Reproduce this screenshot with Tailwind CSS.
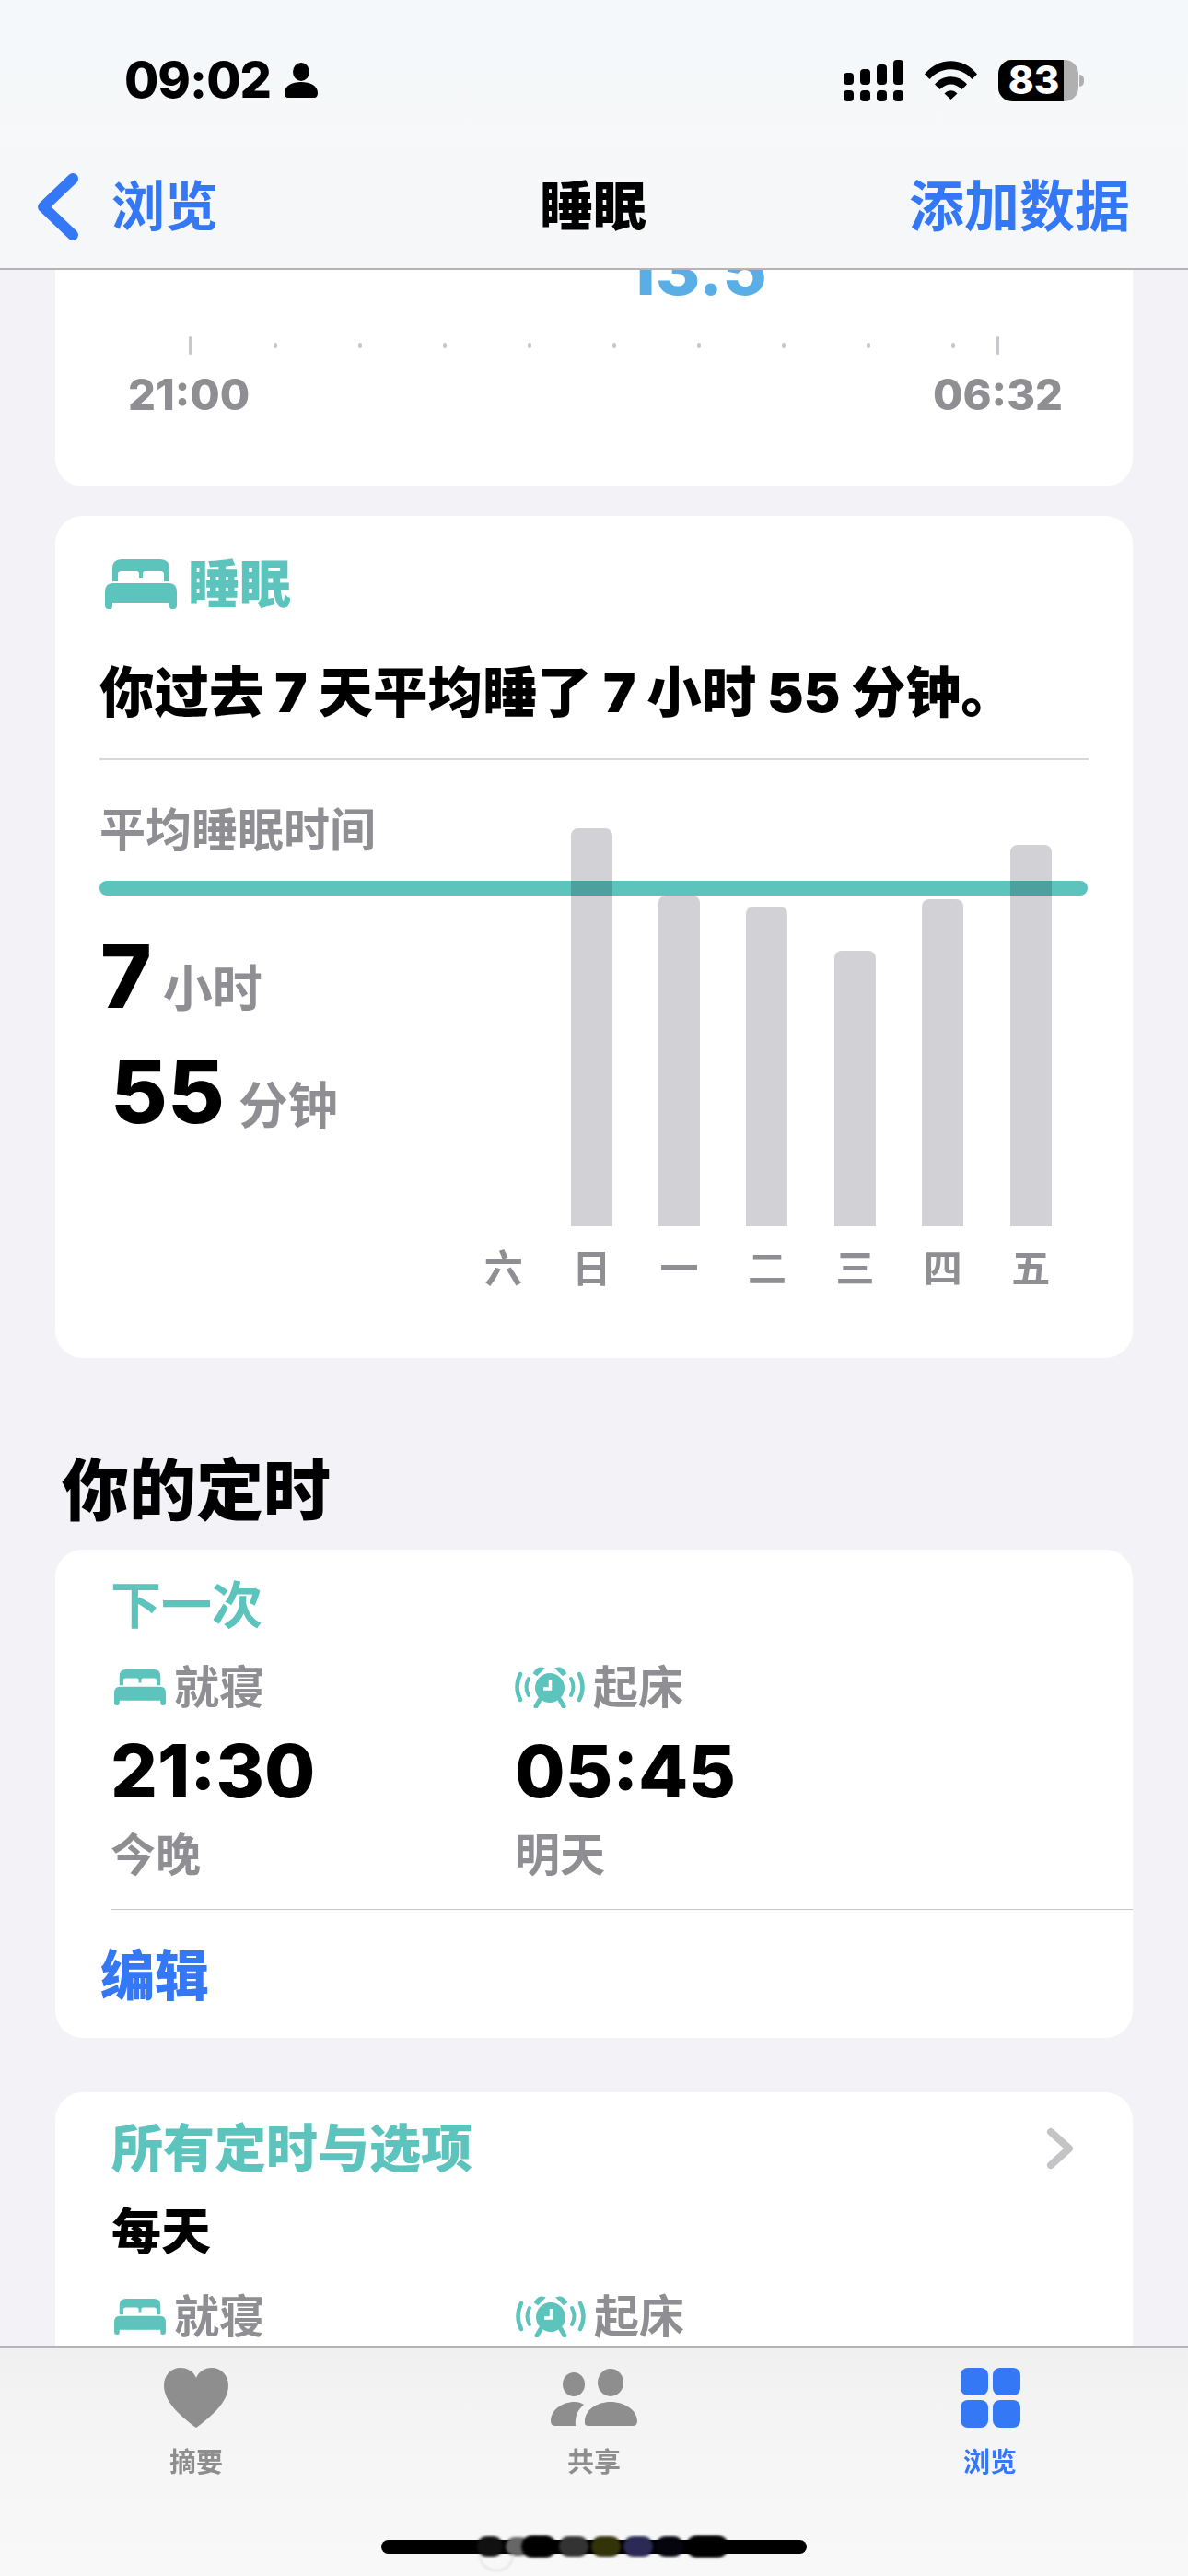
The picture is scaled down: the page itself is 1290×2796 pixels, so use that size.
<!DOCTYPE html>
<html lang="zh-CN">
  <head>
    <meta charset="UTF-8" />
    <meta name="viewport" content="width=device-width,initial-scale=1.0" />
    <title>睡眠</title>
    <script src="https://cdn.jsdelivr.net/npm/@tailwindcss/browser@4"></script>
  </head>
  <body>
    <div class="relative flex flex-col w-[1290px] h-[2796px] overflow-hidden bg-[#f2f2f7] font-['Inter','Noto_Sans_CJK_SC',sans-serif]">
      <!-- status bar + nav -->
      <header class="shrink-0 h-[293px] bg-gradient-to-b from-[#f5f8fa] to-[#f6f7f8] border-b-2 border-[#b4b4b6] z-10">
        <div class="flex items-center justify-between h-[174px] pl-[135px] pr-[113px]">
          <div class="flex items-center gap-[15px]">
            <span class="text-[54px] leading-none font-extrabold text-black tracking-[-1px]">09:02</span>
            <svg class="w-[36px] h-[38px]" viewBox="0 0 36 38" fill="#000">
              <ellipse cx="18" cy="10" rx="9" ry="10" />
              <path d="M0 33C0 25 8 21 18 21S36 25 36 33Q36 38 32 38H4Q0 38 0 33Z" />
            </svg>
          </div>
          <div class="flex items-center gap-[23px]">
            <svg class="w-[65px] h-[45px]" viewBox="0 0 65 45" fill="#000">
              <rect x="0" y="14" width="11" height="13" rx="4" />
              <rect x="18" y="10" width="11" height="17" rx="4" />
              <rect x="36" y="5" width="11" height="22" rx="4" />
              <rect x="54" y="0" width="11" height="27" rx="4" />
              <rect x="0" y="33" width="11" height="12" rx="4" />
              <rect x="18" y="33" width="11" height="12" rx="4" />
              <rect x="36" y="33" width="11" height="12" rx="4" />
              <rect x="54" y="33" width="11" height="12" rx="4" />
            </svg>
            <svg class="w-[57px] h-[42px]" viewBox="0 0 57 42" fill="#000">
              <path d="M0 14.500C15 -4.500 42 -4.500 57 14.500L51.500 20C39 5.500 18 5.500 5.500 20Z" />
              <path d="M11 25.500C20 14.500 37 14.500 46 25.500L40.500 31C33 23.500 24 23.500 16.500 31Z" />
              <path d="M21.500 35.500C25.500 31 31.500 31 35.500 35.500L28.500 42Z" />
            </svg>
            <div class="flex items-center">
              <div class="flex w-[87px] h-[45px] rounded-[15px] bg-[#b0b0b0]">
                <div class="flex items-center justify-center w-[71px] rounded-l-[15px] bg-black pl-[6px] text-white text-[42px] leading-none font-extrabold">83</div>
              </div>
              <div class="w-[5px] h-[13px] ml-[1px] rounded-r-full bg-[#b0b0b0]"></div>
            </div>
          </div>
        </div>
        <div class="relative flex items-center justify-between h-[100px] pl-[41px] pr-[63px]">
          <div class="flex items-center gap-[36px]">
            <svg class="w-[44px] h-[73px]" viewBox="0 0 44 73" fill="none" stroke="#3478f6" stroke-width="12" stroke-linecap="round" stroke-linejoin="round">
              <path d="M38 6L6 36.500L38 67" />
            </svg>
            <span class="text-[58px] leading-none font-bold text-[#3478f6]">浏览</span>
          </div>
          <span class="absolute left-[586px] text-[58px] leading-none font-black text-black">睡眠</span>
          <span class="text-[60px] leading-none font-bold text-[#3478f6]">添加数据</span>
        </div>
      </header>

      <main class="flex-1 min-h-0 overflow-hidden px-[60px]">
        <!-- chart card cut off by nav -->
        <section class="h-[235px] rounded-b-[30px] bg-white overflow-hidden">
          <div class="h-[27px] pl-[619px]">
            <div class="-mt-[37px] text-[74px] leading-[74px] font-extrabold text-[#5aaee6]">13.5</div>
          </div>
          <div class="flex items-center h-[20px] mt-[82px] pl-[145px]">
            <span class="w-[3px] h-[20px] rounded-full bg-[#c7c7cc]"></span>
            <div class="flex items-center gap-[88px] ml-[89px]">
              <span class="w-[4px] h-[6px] rounded-full bg-[#c7c7cc]"></span>
              <span class="w-[4px] h-[6px] rounded-full bg-[#c7c7cc]"></span>
              <span class="w-[4px] h-[6px] rounded-full bg-[#c7c7cc]"></span>
              <span class="w-[4px] h-[6px] rounded-full bg-[#c7c7cc]"></span>
              <span class="w-[4px] h-[6px] rounded-full bg-[#c7c7cc]"></span>
              <span class="w-[4px] h-[6px] rounded-full bg-[#c7c7cc]"></span>
              <span class="w-[4px] h-[6px] rounded-full bg-[#c7c7cc]"></span>
              <span class="w-[4px] h-[6px] rounded-full bg-[#c7c7cc]"></span>
              <span class="w-[4px] h-[6px] rounded-full bg-[#c7c7cc]"></span>
            </div>
            <span class="w-[3px] h-[20px] ml-[45px] rounded-full bg-[#c7c7cc]"></span>
          </div>
          <div class="flex justify-between mt-[20px] pl-[79px] pr-[76px] text-[47px] leading-[46px] font-extrabold text-[#8e8e93]">
            <span>21:00</span>
            <span>06:32</span>
          </div>
        </section>

        <!-- average sleep card -->
        <section class="relative h-[914px] mt-[32px] rounded-[30px] bg-white pt-[44px]">
          <div class="flex items-center gap-[12px] h-[60px] pl-[54px]">
            <svg class="w-[78px] h-[54px]" viewBox="0 0 78 54" fill="#5cc4bd">
              <path d="M8 24V10Q8 0 18 0H60Q70 0 70 10V24H64V16Q64 13 60 13H44Q41 13 41 16V20H37V16Q37 13 34 13H18Q14 13 14 16V24Z" />
              <path d="M8 26H70Q78 26 78 36V50Q78 54 74 54H72Q70 54 70 50V47H8V50Q8 54 6 54H4Q0 54 0 50V36Q0 26 8 26Z" />
            </svg>
            <span class="text-[56px] leading-none font-black text-[#5cc4bd]">睡眠</span>
          </div>
          <p class="mt-[52px] pl-[48px] text-[59.500px] leading-[70px] font-black text-black whitespace-nowrap">你过去 7 天平均睡了 7 小时 55 分钟。</p>
          <div class="h-[2px] mt-[37px] mx-[48px] bg-[#d8d8dc]"></div>
          <!-- teal average line lies over the bars -->
          <div class="absolute left-[48px] top-[396px] w-[1073px] h-[16px] rounded-full bg-[#5cc4bd]"></div>
          <div class="flex mt-[48px] pl-[48px]">
            <div class="w-[393px] shrink-0">
              <div class="text-[50px] leading-[56px] font-bold text-[#8e8e93]">平均睡眠时间</div>
              <div class="flex items-end mt-[83px] pl-[1px]">
                <span class="text-[95px] leading-[95px] font-extrabold text-black">7</span>
                <span class="ml-[12px] mb-[6px] text-[54px] leading-none font-bold text-[#8e8e93]">小时</span>
              </div>
              <div class="flex items-end mt-[30px] pl-[12px]">
                <span class="text-[95px] leading-[95px] font-extrabold text-black">55</span>
                <span class="ml-[15px] mb-[4px] text-[54px] leading-none font-bold text-[#8e8e93]">分钟</span>
              </div>
            </div>
            <div class="grid grid-cols-7 w-[668px] mt-[26px] -ml-[2px] mix-blend-multiply">
              <div class="flex flex-col items-center justify-end h-[432px]"></div>
              <div class="flex flex-col items-center justify-end h-[432px]"><div class="w-[45px] h-[432px] rounded-t-[8px] bg-[#d1d1d6]"></div></div>
              <div class="flex flex-col items-center justify-end h-[432px]"><div class="w-[45px] h-[359px] rounded-t-[8px] bg-[#d1d1d6]"></div></div>
              <div class="flex flex-col items-center justify-end h-[432px]"><div class="w-[45px] h-[347px] rounded-t-[8px] bg-[#d1d1d6]"></div></div>
              <div class="flex flex-col items-center justify-end h-[432px]"><div class="w-[45px] h-[299px] rounded-t-[8px] bg-[#d1d1d6]"></div></div>
              <div class="flex flex-col items-center justify-end h-[432px]"><div class="w-[45px] h-[355px] rounded-t-[8px] bg-[#d1d1d6]"></div></div>
              <div class="flex flex-col items-center justify-end h-[432px]"><div class="w-[45px] h-[414px] rounded-t-[8px] bg-[#d1d1d6]"></div></div>
              <div class="col-span-7 grid grid-cols-7 mt-[22px] text-center text-[42px] leading-[48px] font-bold text-[#8e8e93]">
                <span>六</span><span>日</span><span>一</span><span>二</span><span>三</span><span>四</span><span>五</span>
              </div>
            </div>
          </div>
        </section>

        <h2 class="mt-[106px] pl-[7px] text-[73px] leading-[76px] font-black text-black">你的定时</h2>

        <!-- next schedule card -->
        <section class="h-[530px] mt-[26px] rounded-[30px] bg-white pt-[30px]">
          <div class="pl-[60px] text-[55px] leading-[60px] font-bold text-[#5cc4bd]">下一次</div>
          <div class="grid grid-cols-[439px_1fr] mt-[36px] pl-[60px]">
            <div>
              <div class="flex items-center gap-[9px] h-[46px] pl-[4px]">
                <svg class="w-[56px] h-[39px]" viewBox="0 0 78 54" fill="#5cc4bd">
                  <path d="M8 24V10Q8 0 18 0H60Q70 0 70 10V24H64V16Q64 13 60 13H44Q41 13 41 16V20H37V16Q37 13 34 13H18Q14 13 14 16V24Z" />
                  <path d="M8 26H70Q78 26 78 36V50Q78 54 74 54H72Q70 54 70 50V47H8V50Q8 54 6 54H4Q0 54 0 50V36Q0 26 8 26Z" />
                </svg>
                <span class="text-[49px] leading-none font-bold text-[#8e8e93]">就寝</span>
              </div>
              <div class="mt-[32px] text-[80px] leading-[72px] font-extrabold text-black">21:30</div>
              <div class="mt-[28px] text-[49px] leading-[56px] font-bold text-[#8e8e93]">今晚</div>
            </div>
            <div>
              <div class="flex items-center gap-[9px] h-[46px]">
                <svg class="w-[76px] h-[46px]" viewBox="0 0 76 46" fill="none" stroke="#5cc4bd">
                  <circle cx="38" cy="24" r="16" fill="#5cc4bd" stroke="none" />
                  <path d="M38.500 15V25H31" stroke="#fff" stroke-width="3.500" />
                  <path d="M21 8Q25 1 31 3L24 10Z" fill="#5cc4bd" stroke-width="2" />
                  <path d="M55 8Q51 1 45 3L52 10Z" fill="#5cc4bd" stroke-width="2" />
                  <path d="M27 37L23 44M49 37L53 44" stroke-width="5" stroke-linecap="round" />
                  <path d="M15 14Q10 23 15 32M61 14Q66 23 61 32" stroke-width="4" stroke-linecap="round" />
                  <path d="M6 9Q-1 23 6 37M70 9Q77 23 70 37" stroke-width="4.500" stroke-linecap="round" />
                </svg>
                <span class="text-[49px] leading-none font-bold text-[#8e8e93]">起床</span>
              </div>
              <div class="mt-[32px] text-[79px] leading-[72px] font-extrabold text-black">05:45</div>
              <div class="mt-[28px] text-[49px] leading-[56px] font-bold text-[#8e8e93]">明天</div>
            </div>
          </div>
          <div class="h-[1px] mt-[30px] ml-[60px] bg-[#c6c6c8]"></div>
          <div class="mt-[42px] pl-[49px] text-[59px] leading-[60px] font-black text-[#3478f6]">编辑</div>
        </section>

        <!-- all schedules card, runs under tab bar -->
        <section class="h-[400px] mt-[59px] rounded-t-[30px] bg-white pt-[30px] px-[61px]">
          <div class="flex items-center justify-between h-[62px]">
            <span class="text-[56px] leading-none font-black text-[#5cc4bd]">所有定时与选项</span>
            <svg class="w-[30px] h-[46px] mr-[3px]" viewBox="0 0 30 46" fill="none" stroke="#c4c4c6" stroke-width="8" stroke-linecap="round" stroke-linejoin="round">
              <path d="M5 5L25 23L5 41" />
            </svg>
          </div>
          <div class="mt-[30px] text-[54px] leading-[60px] font-black text-black">每天</div>
          <div class="grid grid-cols-[439px_1fr] mt-[38px]">
            <div class="flex items-center gap-[9px] h-[46px] pl-[3px]">
              <svg class="w-[56px] h-[39px]" viewBox="0 0 78 54" fill="#5cc4bd">
                <path d="M8 24V10Q8 0 18 0H60Q70 0 70 10V24H64V16Q64 13 60 13H44Q41 13 41 16V20H37V16Q37 13 34 13H18Q14 13 14 16V24Z" />
                <path d="M8 26H70Q78 26 78 36V50Q78 54 74 54H72Q70 54 70 50V47H8V50Q8 54 6 54H4Q0 54 0 50V36Q0 26 8 26Z" />
              </svg>
              <span class="text-[49px] leading-none font-bold text-[#8e8e93]">就寝</span>
            </div>
            <div class="flex items-center gap-[9px] h-[46px]">
              <svg class="w-[76px] h-[46px]" viewBox="0 0 76 46" fill="none" stroke="#5cc4bd">
                <circle cx="38" cy="24" r="16" fill="#5cc4bd" stroke="none" />
                <path d="M38.500 15V25H31" stroke="#fff" stroke-width="3.500" />
                <path d="M21 8Q25 1 31 3L24 10Z" fill="#5cc4bd" stroke-width="2" />
                <path d="M55 8Q51 1 45 3L52 10Z" fill="#5cc4bd" stroke-width="2" />
                <path d="M27 37L23 44M49 37L53 44" stroke-width="5" stroke-linecap="round" />
                <path d="M15 14Q10 23 15 32M61 14Q66 23 61 32" stroke-width="4" stroke-linecap="round" />
                <path d="M6 9Q-1 23 6 37M70 9Q77 23 70 37" stroke-width="4.500" stroke-linecap="round" />
              </svg>
              <span class="text-[49px] leading-none font-bold text-[#8e8e93]">起床</span>
            </div>
          </div>
        </section>
      </main>

      <!-- tab bar -->
      <footer class="relative shrink-0 h-[250px] bg-gradient-to-b from-[#f0f0f1] via-[#f6f6f7] to-[#f8f8f9] border-t-2 border-[#b4b4b6] z-10">
        <div class="grid grid-cols-3 pt-[22px]">
          <div class="flex flex-col items-center gap-[20px] w-[426px]">
            <svg class="w-[70px] h-[65px]" viewBox="0 0 70 65" fill="#8e8e8e">
              <path d="M35 65C20 54 0 38 0 19C0 8 8 0 18 0C26 0 32 4 35 11C38 4 44 0 52 0C62 0 70 8 70 19C70 38 50 54 35 65Z" />
            </svg>
            <span class="text-[29px] leading-[36px] font-bold text-[#8e8e8e]">摘要</span>
          </div>
          <div class="flex flex-col items-center gap-[20px]">
            <svg class="w-[94px] h-[65px]" viewBox="0 0 94 65" fill="#8e8e8e">
              <ellipse cx="25" cy="18" rx="12" ry="13" />
              <ellipse cx="65" cy="16" rx="14" ry="15" />
              <path d="M0 58C0 46 12 37 26 37C30 37 33 38 36 40C30 45 26 52 27 63H5Q0 63 0 58Z" />
              <path d="M37 58C37 46 50 37 65 37S94 46 94 58Q94 63 89 63H41Q36 63 37 58Z" />
            </svg>
            <span class="text-[29px] leading-[36px] font-bold text-[#8e8e8e]">共享</span>
          </div>
          <div class="flex flex-col items-center gap-[20px]">
            <svg class="w-[65px] h-[65px]" viewBox="0 0 65 65" fill="#3478f6">
              <rect x="0" y="0" width="30" height="30" rx="8" />
              <rect x="35" y="0" width="30" height="30" rx="8" />
              <rect x="0" y="35" width="30" height="30" rx="8" />
              <rect x="35" y="35" width="30" height="30" rx="8" />
            </svg>
            <span class="text-[29px] leading-[36px] font-bold text-[#3478f6]">浏览</span>
          </div>
        </div>
        <!-- home indicator, with the smudged-out watermark lying over it -->
        <div class="absolute left-[414px] top-[209px] w-[462px] h-[15px] rounded-full bg-black"></div>
        <div class="absolute left-[518px] top-[204px] flex items-center gap-[3px] blur-[1.500px]">
          <span class="w-[28px] h-[22px] rounded-full bg-[#111]"></span>
          <span class="w-[26px] h-[20px] rounded-full bg-[#666]"></span>
          <span class="w-[38px] h-[24px] -ml-[12px] rounded-full bg-black"></span>
          <span class="w-[32px] h-[22px] rounded-full bg-[#333]"></span>
          <span class="w-[32px] h-[22px] rounded-full bg-[#33330a]"></span>
          <span class="w-[32px] h-[22px] rounded-full bg-[#2a2a55]"></span>
          <span class="w-[30px] h-[22px] rounded-full bg-[#050510]"></span>
          <span class="w-[46px] h-[24px] rounded-full bg-black"></span>
        </div>
        <div class="absolute left-[520px] top-[225px] w-[38px] h-[18px] rounded-b-full border-2 border-t-0 border-[#e4e4e6] blur-[1px]"></div>
      </footer>
    </div>
  </body>
</html>
